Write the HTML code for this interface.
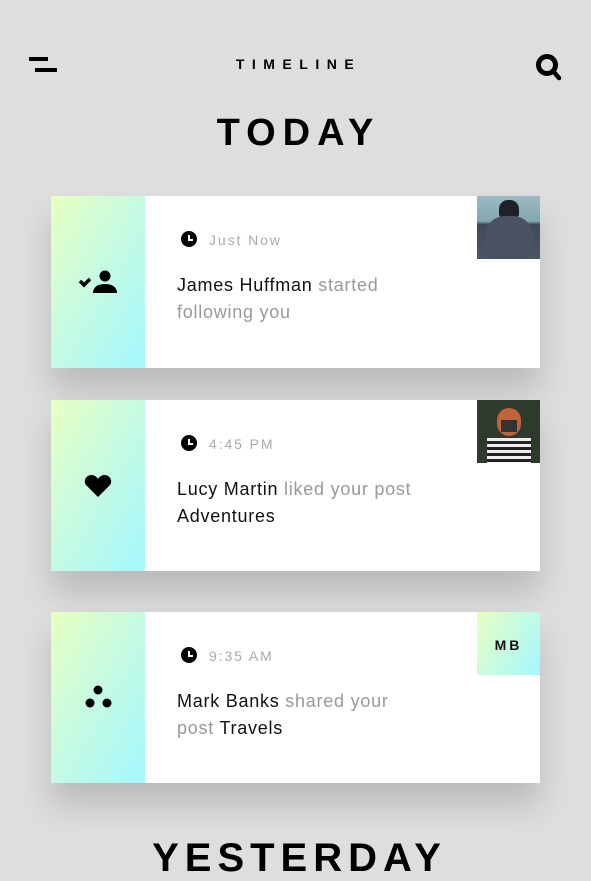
<!DOCTYPE html>
<html><head><style>
body{margin:0;width:591px;height:860px;overflow:hidden;background:#dedede;font-family:"Liberation Sans",sans-serif;position:relative}
.a{position:absolute}
.title{left:0;width:591px;text-align:center;font-weight:bold}
.card{position:absolute;left:51px;width:489px;height:172px;background:#fff;box-shadow:0 22px 30px rgba(0,0,0,0.16)}
.strip{position:absolute;left:0;top:0;width:94px;height:100%;background:linear-gradient(120deg,#e8ffc2 0%,#c8fbe0 45%,#a4f7ff 100%)}
.time{position:absolute;left:130px;top:35px;font-size:14px;letter-spacing:1.9px;color:#aaa;line-height:18px}
.time svg{position:absolute;left:0;top:0}
.time span{margin-left:28px}
.txt{position:absolute;left:126px;top:76px;font-size:18px;line-height:27px;color:#999;letter-spacing:.75px}
.txt b{font-weight:normal;color:#111}
.thumb{position:absolute;right:0;top:0;width:63px;height:63px}
.icon{position:absolute;left:0;width:94px;text-align:center}
</style></head><body>
<div class="a" style="left:29px;top:57px;width:19px;height:4px;background:#000"></div>
<div class="a" style="left:35px;top:68px;width:22px;height:4px;background:#000"></div>
<div class="a title" style="top:56px;font-size:14px;letter-spacing:7.5px;padding-left:6px;box-sizing:border-box">TIMELINE</div>
<svg class="a" style="left:534px;top:53px" width="29" height="28" viewBox="0 0 29 28"><circle cx="13" cy="12" r="8.5" fill="none" stroke="#000" stroke-width="5"/><path d="M19 18l6 7" stroke="#000" stroke-width="4.5" stroke-linecap="round"/></svg>
<div class="a title" style="top:112px;font-size:38px;letter-spacing:7px;padding-left:6px;box-sizing:border-box">TODAY</div>

<div class="card" style="top:196px">
 <div class="strip"></div>
 <svg class="icon" style="top:74px" width="94" height="24" viewBox="0 0 94 24"><path d="M29 11l4 4 6-6" stroke="#000" stroke-width="3.5" fill="none"/><circle cx="54" cy="6" r="5.5"/><path d="M42 23c0-6 5-9 12-9s12 3 12 9z"/></svg>
 <div class="time"><svg width="16" height="16"><circle cx="8" cy="8" r="8"/><path d="M8 4v5h4" stroke="#fff" stroke-width="2" fill="none"/></svg><span>Just Now</span></div>
 <div class="txt"><b>James Huffman</b> started<br>following you</div>
 <div class="thumb" style="background:linear-gradient(#9fb9c4 0%,#7fa8b0 40%,#3f4a58 45%,#4b5566 100%)"><div style="position:absolute;left:22px;top:4px;width:20px;height:18px;border-radius:9px 9px 4px 4px;background:#1e2228"></div><div style="position:absolute;left:8px;top:20px;width:48px;height:43px;border-radius:20px 20px 0 0;background:#4a5262"></div></div>
</div>

<div class="card" style="top:400px;height:171px">
 <div class="strip"></div>
 <svg class="icon" style="top:74px" width="94" height="24" viewBox="0 0 94 24"><path d="M47 23L35 11c-3-4 0-10 5.5-10 3 0 5.5 2 6.5 4 1-2 3.5-4 6.5-4 5.5 0 8.5 6 5.5 10z"/></svg>
 <div class="time"><svg width="16" height="16"><circle cx="8" cy="8" r="8"/><path d="M8 4v5h4" stroke="#fff" stroke-width="2" fill="none"/></svg><span>4:45 PM</span></div>
 <div class="txt"><b>Lucy Martin</b> liked your post<br><b>Adventures</b></div>
 <div class="thumb" style="background:#2d3a2c"><div style="position:absolute;left:20px;top:8px;width:24px;height:28px;border-radius:12px;background:#c0623a"></div><div style="position:absolute;left:10px;top:38px;width:44px;height:25px;background:repeating-linear-gradient(#eee 0 3px,#222 3px 6px)"></div><div style="position:absolute;left:24px;top:20px;width:16px;height:12px;background:#333"></div></div>
</div>

<div class="card" style="top:612px;height:171px">
 <div class="strip"></div>
 <svg class="icon" style="top:73px" width="94" height="26" viewBox="0 0 94 26"><circle cx="47" cy="5" r="4.5"/><circle cx="39" cy="18" r="4.5"/><circle cx="56" cy="18" r="4.5"/></svg>
 <div class="time" style="top:35px"><svg width="16" height="16"><circle cx="8" cy="8" r="8"/><path d="M8 4v5h4" stroke="#fff" stroke-width="2" fill="none"/></svg><span>9:35 AM</span></div>
 <div class="txt"><b>Mark Banks</b> shared your<br>post <b>Travels</b></div>
 <div class="thumb" style="background:linear-gradient(120deg,#e8ffc2,#a4f7ff);font-weight:bold;font-size:14px;letter-spacing:3px;text-align:center;line-height:66px;color:#111">MB</div>
</div>

<div class="a title" style="top:836px;font-size:40px;letter-spacing:6px;padding-left:8px;box-sizing:border-box">YESTERDAY</div>
</body></html>
